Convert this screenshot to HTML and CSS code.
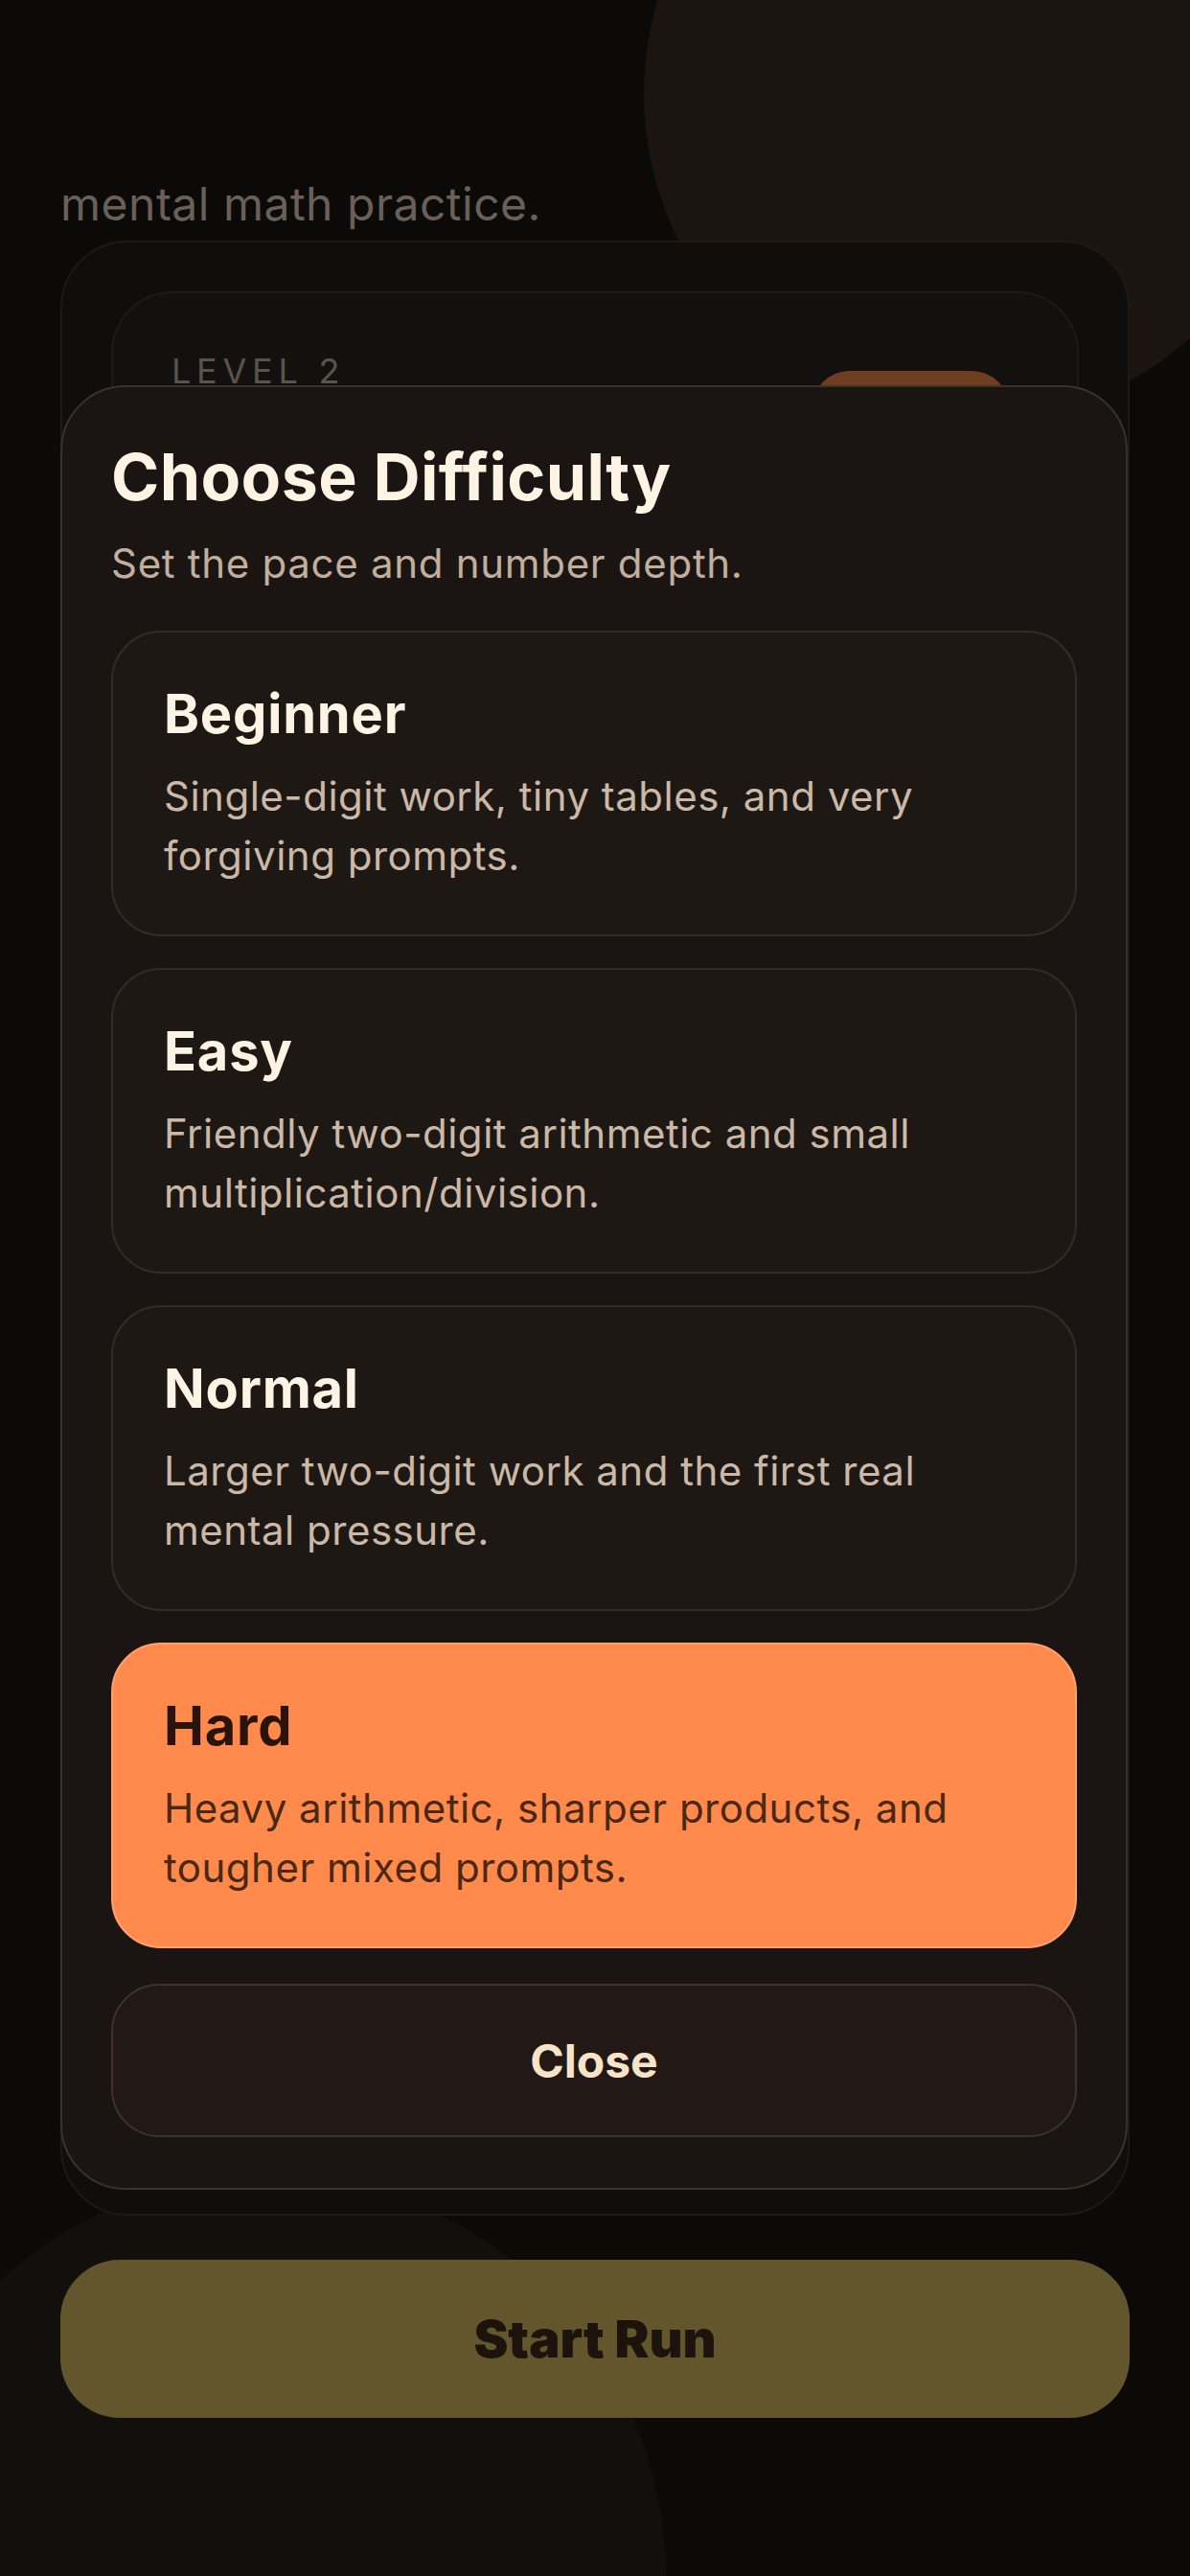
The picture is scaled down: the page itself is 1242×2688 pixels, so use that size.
FILE: index.html
```html
<!DOCTYPE html>
<html lang="en">
<head>
<meta charset="utf-8">
<title>Choose Difficulty</title>
<link rel="stylesheet" href="styles.css">
</head>
<body>
<div class="screen">
  <div class="blob blob-top"></div>
  <div class="blob blob-bottom"></div>

  <main class="home">
    <p class="hero-text">mental math practice.</p>
    <section class="panel">
      <div class="level-card">
        <div class="level-row">
          <span class="level-label">LEVEL 2</span>
          <span class="level-pill" aria-hidden="true"></span>
        </div>
      </div>
    </section>
    <button class="start-btn" type="button">Start Run</button>
  </main>

  <div class="sheet" role="dialog" aria-label="Choose Difficulty">
    <h2 class="sheet-title">Choose Difficulty</h2>
    <p class="sheet-sub">Set the pace and number depth.</p>
    <div class="options">
      <button class="option" type="button">
        <span class="option-title">Beginner</span>
        <span class="option-desc">Single-digit work, tiny tables, and very forgiving prompts.</span>
      </button>
      <button class="option" type="button">
        <span class="option-title">Easy</span>
        <span class="option-desc">Friendly two-digit arithmetic and small multiplication/division.</span>
      </button>
      <button class="option" type="button">
        <span class="option-title">Normal</span>
        <span class="option-desc">Larger two-digit work and the first real mental pressure.</span>
      </button>
      <button class="option option-active" type="button">
        <span class="option-title">Hard</span>
        <span class="option-desc">Heavy arithmetic, sharper products, and tougher mixed prompts.</span>
      </button>
    </div>
    <button class="close-btn" type="button">Close</button>
  </div>
</div>
</body>
</html>
```

FILE: styles.css
```css
* {
  box-sizing: border-box;
  margin: 0;
  padding: 0;
}

html,
body {
  width: 1242px;
  height: 2688px;
}

body {
  background: #0b0a09;
  font-family: Inter, "Noto Sans", "Liberation Sans", sans-serif;
  overflow: hidden;
}

.screen {
  position: relative;
  width: 1242px;
  height: 2688px;
  overflow: hidden;
}

.blob {
  position: absolute;
  border-radius: 50%;
}

.blob-top {
  left: 672px;
  top: -244px;
  width: 684px;
  height: 684px;
  background: #1b140f;
}

.blob-bottom {
  left: -135px;
  top: 2270px;
  width: 830px;
  height: 840px;
  background: #12100c;
}

.home {
  position: relative;
  display: flex;
  flex-direction: column;
  padding: 182px 63px 0;
}

.hero-text {
  font-size: 48px;
  line-height: 62px;
  letter-spacing: 0.5px;
  color: #6a6057;
}

.panel {
  margin-top: 7px;
  height: 2061px;
  background: #100e0d;
  border: 2px solid #1d1916;
  border-radius: 70px;
  padding: 51px 51px 0;
}

.level-card {
  height: 900px;
  background: #131110;
  border: 2px solid #1e1a17;
  border-radius: 64px;
  padding: 60px 70px 0 61px;
}

.level-row {
  display: flex;
  justify-content: space-between;
  align-items: flex-start;
}

.level-label {
  font-size: 36px;
  line-height: 43px;
  letter-spacing: 0.16em;
  color: #5b534b;
}

.level-pill {
  margin-top: 21px;
  width: 207px;
  height: 84px;
  border-radius: 40px;
  background: #6e3d22;
}

.start-btn {
  margin-top: 46px;
  height: 165px;
  border: none;
  border-radius: 62px;
  background: #63552c;
  color: #1b130c;
  font-family: inherit;
  font-size: 54px;
  font-weight: 900;
  letter-spacing: 0;
}

.sheet {
  position: absolute;
  left: 63px;
  top: 402px;
  width: 1114px;
  height: 1883px;
  background: #1a1512;
  border: 2px solid #3b322c;
  border-radius: 68px;
  padding: 52px 51px;
  display: flex;
  flex-direction: column;
}

.sheet-title {
  font-size: 68px;
  line-height: 82px;
  font-weight: 700;
  color: #fff3e3;
  letter-spacing: 0.4px;
}

.sheet-sub {
  margin-top: 20px;
  font-size: 42px;
  line-height: 59px;
  letter-spacing: 0.7px;
  color: #c2ae9c;
}

.options {
  margin-top: 41px;
  display: flex;
  flex-direction: column;
  gap: 33px;
}

.option {
  display: flex;
  flex-direction: column;
  justify-content: flex-start;
  align-items: flex-start;
  width: 100%;
  height: 319px;
  border: 2px solid #342b26;
  border-radius: 52px;
  background: #1e1815;
  padding: 52px 53px 0;
  text-align: left;
  font-family: inherit;
}

.option-title {
  display: block;
  font-size: 56px;
  line-height: 67px;
  font-weight: 700;
  letter-spacing: 0.8px;
  color: #fff3e3;
}

.option-desc {
  display: block;
  margin-top: 21px;
  font-size: 42px;
  line-height: 62px;
  letter-spacing: 0.5px;
  color: #cbb8a7;
}

.option-active {
  background: #ff8a4c;
  border-color: #ffa070;
}

.option-active .option-title {
  color: #2a140a;
}

.option-active .option-desc {
  color: #4a2814;
}

.close-btn {
  margin-top: 37px;
  width: 100%;
  height: 160px;
  border: 2px solid #3e332d;
  border-radius: 50px;
  background: #221816;
  color: #f7e3c7;
  font-family: inherit;
  font-size: 48px;
  font-weight: 700;
}
```
